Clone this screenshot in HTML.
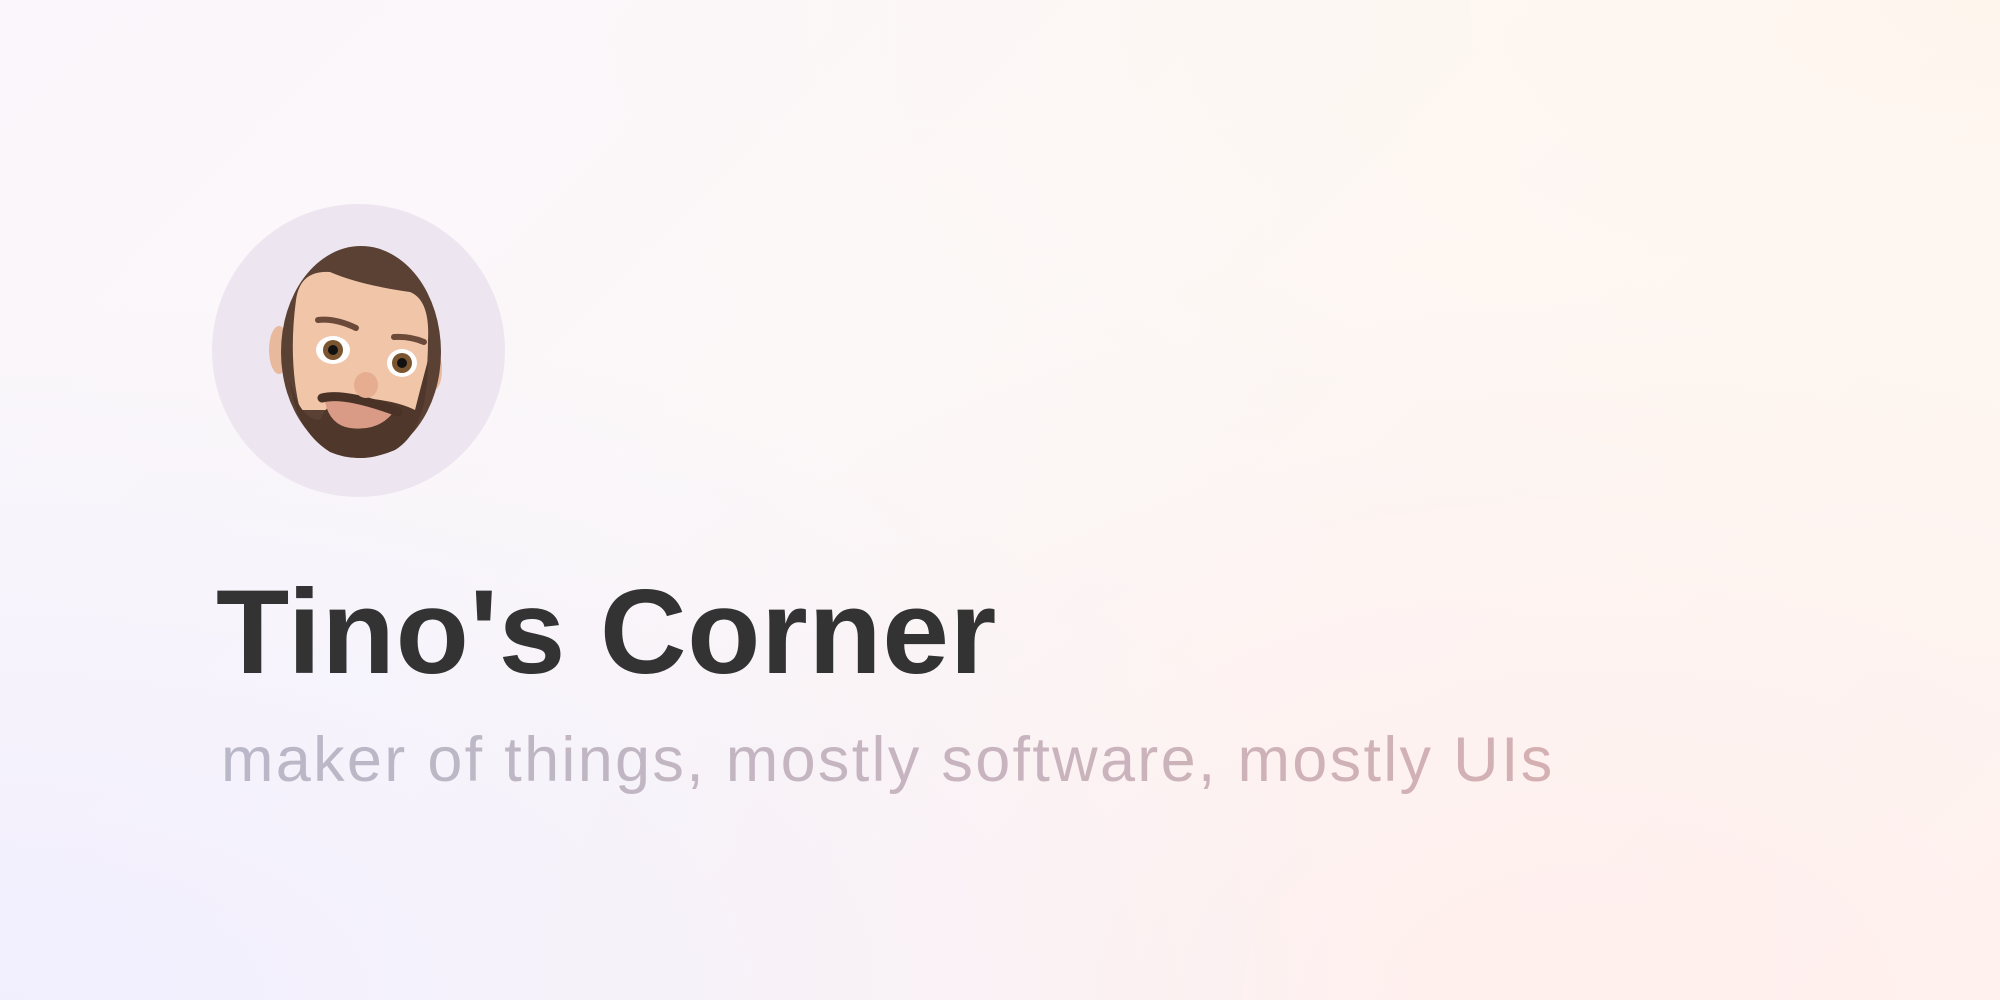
<!DOCTYPE html>
<html><head><meta charset="utf-8"><style>
html,body{margin:0;padding:0}
body{width:2000px;height:1000px;overflow:hidden;position:relative;
background:linear-gradient(135deg,#faf6fb 0%,#fcf8f8 45%,#fff6f2 100%);font-family:"Liberation Sans",sans-serif}
.ov{position:absolute;inset:0;background:radial-gradient(ellipse at 0% 100%,rgba(240,238,255,.9),rgba(240,238,255,0) 50%),radial-gradient(ellipse at 100% 0%,rgba(255,246,236,.8),rgba(255,246,236,0) 50%),radial-gradient(ellipse at 80% 100%,rgba(255,236,234,.7),rgba(255,236,234,0) 55%)}
.circ{position:absolute;left:212px;top:204px;width:293px;height:293px;border-radius:50%;background:#ede6f0}
h1{position:absolute;left:216px;top:557px;margin:0;font-size:120px;font-weight:bold;color:#333;line-height:150px;letter-spacing:0.6px}
.sub{position:absolute;left:221px;top:720px;margin:0;font-size:63px;line-height:80px;letter-spacing:2.3px;
background:linear-gradient(90deg,#b9b8c8,#c8b4be 60%,#d4b0b2);-webkit-background-clip:text;background-clip:text;color:transparent}
svg{position:absolute;left:0;top:0}
</style></head><body><div class="ov"></div>
<div class="circ"></div>
<svg width="2000" height="1000">
<ellipse cx="279" cy="350" rx="10" ry="24" fill="#e8b99c"/>
<ellipse cx="434" cy="370" rx="8" ry="20" fill="#e8b99c"/>
<ellipse cx="361" cy="352" rx="80" ry="106" fill="#5a4134"/>
<path d="M296 300 Q300 270 330 272 Q360 285 410 292 Q430 300 428 340 Q428 380 420 410 L300 410 Q288 360 296 300Z" fill="#f1c5a8"/>
<path d="M290 380 Q300 420 320 420 Q330 395 360 398 Q395 400 415 410 Q420 390 428 360 Q428 430 395 450 Q360 465 330 452 Q295 430 290 380Z" fill="#4f372b"/>
<path d="M325 402 Q360 390 395 410 Q380 432 350 428 Q330 425 325 402Z" fill="#d99a86"/>
<path d="M322 398 Q345 392 398 412" stroke="#4a3227" stroke-width="9" fill="none" stroke-linecap="round"/>
<path d="M318 320 Q335 318 356 328" stroke="#6b4a3a" stroke-width="6" fill="none" stroke-linecap="round"/>
<path d="M394 337 Q410 336 424 342" stroke="#6b4a3a" stroke-width="6" fill="none" stroke-linecap="round"/>
<ellipse cx="333" cy="350" rx="17" ry="14" fill="#fff"/><circle cx="333" cy="350" r="10" fill="#7a5530"/><circle cx="333" cy="350" r="5" fill="#111"/>
<ellipse cx="402" cy="363" rx="15" ry="14" fill="#fff"/><circle cx="402" cy="363" r="10" fill="#7a5530"/><circle cx="402" cy="363" r="5" fill="#111"/>
<ellipse cx="366" cy="385" rx="12" ry="13" fill="#e6ad90"/>
</svg>
<h1>Tino's Corner</h1>
<p class="sub">maker of things, mostly software, mostly UIs</p>
</body></html>
